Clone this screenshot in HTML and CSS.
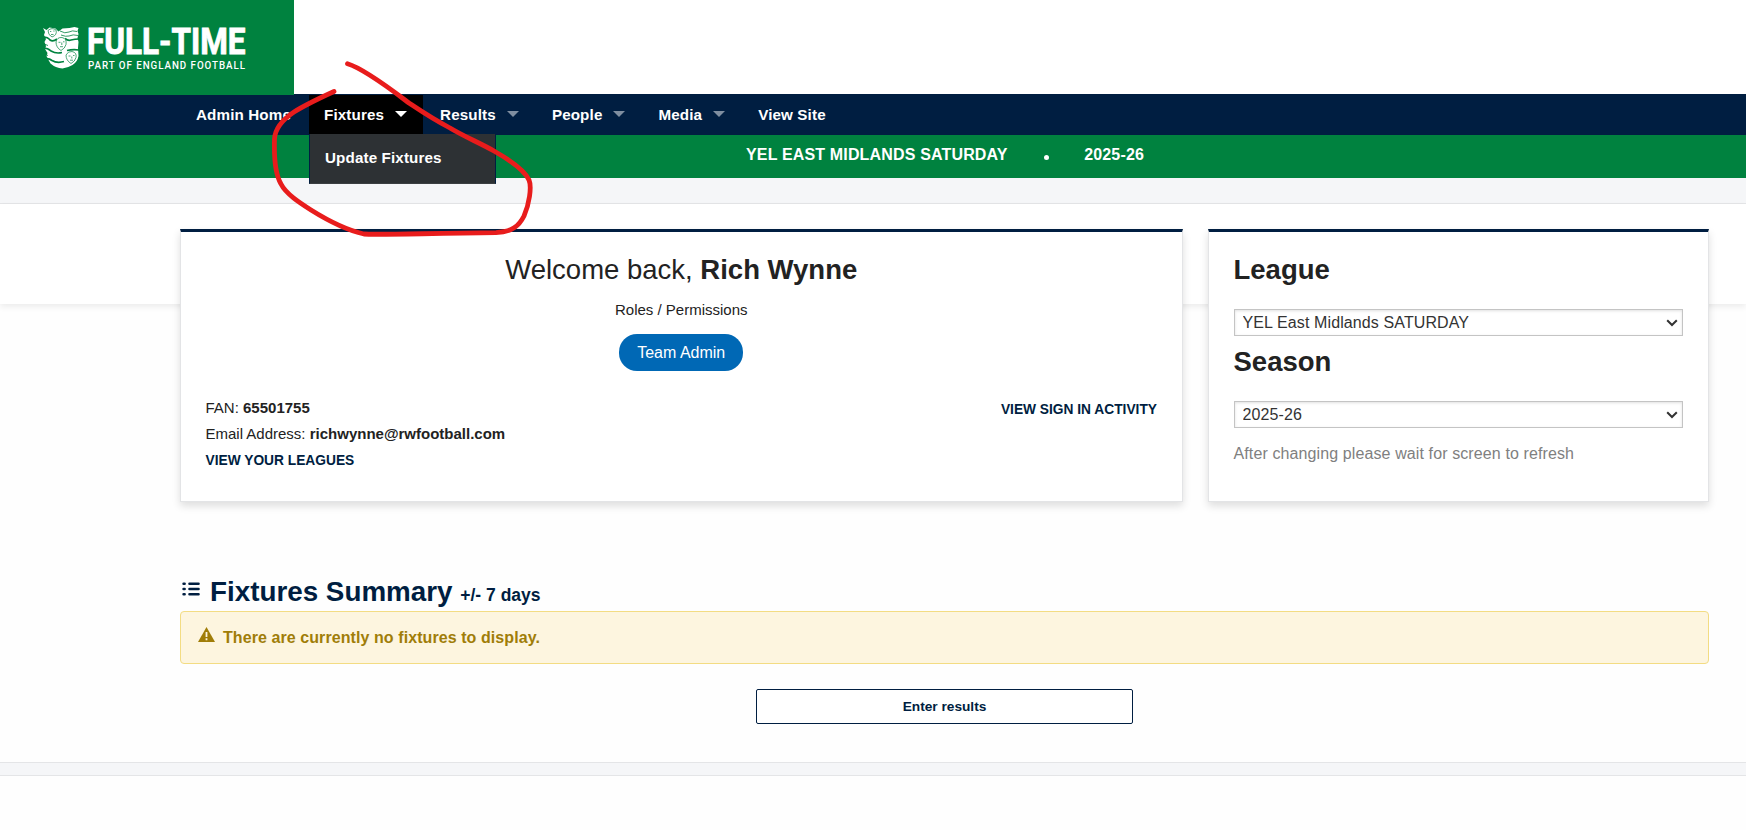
FILE: index.html
```html
<!DOCTYPE html>
<html lang="en">
<head>
  <meta charset="UTF-8">
  <meta name="viewport" content="width=device-width, initial-scale=1.0">
  <title>Full-Time - Admin Home</title>
  <link rel="stylesheet" href="styles.css">
</head>
<body>
  <!-- Logo -->
  <header class="site-header">
    <a class="logo">
      <svg width="294" height="95" viewBox="0 0 294 95">
        <path class="crest" d="M43 28l3.500 2 3-2.500 6 1 3 3 4-3 7-.500 5-1 4 1-1 3 1 3-1 4 1 4-.500 6 .500 8q-1 6-6 9-5 3-10 3.500-7-.500-12-5l-2-3.500-2-4 1-3-2.500-4 1-3-1.500-4 1.500-3-2-4 1-3z"/>
        <path class="crest-line" d="M43 37q5 0 7 3 3 2 7-1M65 38.500q3 2.500 6 1.500 4-1 8-1M43 48q5 0 8 3 5 3 11 1.500M67 50.500q6-1.500 12-.500M44 59q5-1 8 1.500 5 3 12 1"/>
        <path class="crest-thin" d="M60 31q5 3 9 1 3-2 8-.500M61 35q5 2 8 1 4-2 9-.500M43 43.500l5 2M44 54l4 1.500"/>
        <g class="crest-head">
          <path d="M48 30.500q4-3.500 8-.500 1.500 5-4 7-4-2-4-6.500z"/>
          <path d="M56 42q1-5 6-4.500 5 1 4 7-1 4-5 6-5-3-5-8.500z"/>
          <path d="M66 55q2-4 6-3.500 5 1 4 6-1 4-5 6-5-3-5-8.500z"/>
        </g>
        <path class="crest-face" d="M50 31.500h1.300M53.300 31h1.300M51 34.500h2.500M58.500 42.300h2M63 41.800h1.500M60 46.700h3M61.800 42.500v2.500M68.500 56h2M73 55.500h1.500M70 60.200h3M71.800 56.500v2"/>
        <text class="logo-name" x="87" y="54" textLength="158.500" lengthAdjust="spacingAndGlyphs">FULL-TIME</text>
        <text class="logo-sub" x="88" y="68.700" textLength="158" lengthAdjust="spacingAndGlyphs">PART OF ENGLAND FOOTBALL</text>
      </svg>
    </a>
  </header>

  <!-- Main menu -->
  <nav class="main-nav">
    <ul class="menu">
      <li class="menu-item home">Admin Home</li>
      <li class="menu-item active">Fixtures <span class="caret"></span>
        <div class="submenu">Update Fixtures</div>
      </li>
      <li class="menu-item">Results <span class="caret"></span></li>
      <li class="menu-item">People <span class="caret"></span></li>
      <li class="menu-item">Media <span class="caret"></span></li>
      <li class="menu-item">View Site</li>
    </ul>
  </nav>

  <div class="league-bar">
    <span>YEL EAST MIDLANDS SATURDAY</span>
    <span class="dot"></span>
    <span>2025-26</span>
  </div>
  <div class="strip-top"></div>
  <div class="banner"></div>

  <main class="container">
    <div class="cards">
      <section class="card">
        <h2 class="welcome">Welcome back, <strong>Rich Wynne</strong></h2>
        <p class="roles">Roles / Permissions</p>
        <span class="pill">Team Admin</span>
        <div class="details">
          <div class="details-left">
            <p>FAN: <strong>65501755</strong></p>
            <p>Email Address: <strong>richwynne@rwfootball.com</strong></p>
            <p><a class="link">VIEW YOUR LEAGUES</a></p>
          </div>
          <a class="link activity">VIEW SIGN IN ACTIVITY</a>
        </div>
      </section>

      <section class="card">
        <h2>League</h2>
        <div class="select-wrap">
          <select class="select">
            <option>YEL East Midlands SATURDAY</option>
          </select>
          <svg class="select-arrow" width="12" height="8" viewBox="0 0 12 8"><path d="M1.200 1.200L6 6l4.800-4.800"/></svg>
        </div>
        <h2 class="season">Season</h2>
        <div class="select-wrap">
          <select class="select">
            <option>2025-26</option>
          </select>
          <svg class="select-arrow" width="12" height="8" viewBox="0 0 12 8"><path d="M1.200 1.200L6 6l4.800-4.800"/></svg>
        </div>
        <p class="hint">After changing please wait for screen to refresh</p>
      </section>
    </div>

    <!-- Fixtures -->
    <h2 class="summary">
      <svg class="list-icon" width="18" height="14" viewBox="0 0 18 14">
        <path d="M7.500 1.800h9M7.500 7h9M7.500 12.200h9M1.600 1.800h1M1.600 7h1M1.600 12.200h1"/>
      </svg>
      <span>Fixtures Summary <small>+/- 7 days</small></span>
    </h2>
    <div class="alert">
      <svg class="warn-icon" width="17" height="15" viewBox="0 0 17 15">
        <path class="warn-shape" d="M8.500 0L17 15H0z"/>
        <path class="warn-mark" d="M8.500 5v5M8.500 11.300v2"/>
      </svg>
      <span>There are currently no fixtures to display.</span>
    </div>
    <button class="btn">Enter results</button>
  </main>

  <div class="strip-bottom"></div>

  <!-- Red circle round the Fixtures menu -->
  <svg class="marker" width="300" height="200" viewBox="250 50 300 200">
    <path d="M334 91.500C322 97 305 105 294 112C282 120 275 129 274.500 139C274 155 275 174 281 184C286 194 300 203 311 210C327 220 346 230 364 234C375 235 420 233.500 496 232.700C512 232 519 226 524 216C529 205 532 187 529 180C524 169 508 159 494 151C480 143 463 136 450 128C431 118 418 109 409 103C397 94 365 69 347.500 63.800"/>
  </svg>
</body>
</html>
```

FILE: styles.css
```css
* {
  box-sizing: border-box;
}

body {
  margin: 0;
  background: #fefefe;
  color: #222;
  font-family: Arial, "Liberation Sans", sans-serif;
  font-size: 16px;
  overflow: hidden;
}

h2, p, ul {
  margin: 0;
  padding: 0;
}

/* Header */
.site-header {
  height: 94px;
  background: #fff;
}

.logo {
  display: block;
  position: relative;
  z-index: 1;
  width: 294px;
  height: 95px;
  background: #00823f;
}

.logo svg {
  display: block;
}

.crest, .crest-head {
  fill: #fff;
}

.crest-line, .crest-thin {
  fill: none;
  stroke: #00823f;
  stroke-width: 1.7;
}

.crest-thin {
  stroke-width: 0.8;
}

.crest-head {
  stroke: #00823f;
  stroke-width: 0.7;
}

.crest-face {
  fill: none;
  stroke: #00823f;
  stroke-width: 0.7;
}

.logo-name {
  fill: #fff;
  stroke: #fff;
  stroke-width: 0.9;
  font-family: Roboto, sans-serif;
  font-size: 37.500px;
  font-weight: bold;
}

.logo-sub {
  fill: #fff;
  font-family: Roboto, sans-serif;
  font-size: 10.200px;
  font-weight: 500;
  letter-spacing: 1px;
}

/* Menu */
.main-nav {
  height: 41px;
  padding: 1px 0 1px 181px;
  background: #001e41;
}

.menu {
  display: flex;
  gap: 2px;
  height: 100%;
  list-style: none;
}

.menu-item {
  display: flex;
  align-items: center;
  position: relative;
  padding: 0 15px 1px;
  color: #fff;
  font-size: 15.200px;
  font-weight: bold;
  letter-spacing: 0.130px;
}

.menu-item.home {
  padding-right: 16px;
}

.menu-item.active {
  background: #000;
}

.caret {
  margin: 0 1px 0 11px;
  border: 6px solid transparent;
  border-top-color: #7f8ea0;
  border-bottom: 0;
}

.active .caret {
  border-top-color: #fff;
}

.submenu {
  position: absolute;
  top: 39px;
  left: 0;
  z-index: 2;
  width: 187px;
  height: 50px;
  padding: 0 15px;
  border: 1px solid #001e41;
  border-top: 0;
  border-bottom-color: #3b3f42;
  background: #2d3134;
  line-height: 48px;
  white-space: nowrap;
}

.league-bar {
  display: flex;
  justify-content: center;
  height: 43px;
  padding: 0 17px 0 161px;
  background: #00823f;
  color: #fff;
  font-weight: bold;
  letter-spacing: 0.160px;
  line-height: 39px;
}

.dot {
  width: 5px;
  height: 5px;
  margin: 20px 35.500px 0 36px;
  border-radius: 50%;
  background: #fff;
}

.strip-top {
  height: 26px;
  border-bottom: 1px solid #e4e5e7;
  background: #f5f6f8;
}

.banner {
  height: 100px;
  background: #fff;
  box-shadow: 0 3px 6px rgba(0, 0, 0, 0.07);
}

/* Content */
.container {
  position: relative;
  width: 1529px;
  margin: -75px 0 0 180px;
}

.cards {
  display: grid;
  grid-template-columns: 1003px 501px;
  gap: 25px;
}

.card {
  height: 273px;
  padding: 21px 25px 0 24.500px;
  border: 1px solid #e3e4e6;
  border-top: 3px solid #001e41;
  background: #fff;
  box-shadow: 0 4px 8px rgba(0, 0, 0, 0.13);
}

.card h2 {
  font-size: 27.500px;
  line-height: 34px;
}

.card .welcome {
  font-weight: normal;
  text-align: center;
}

.roles {
  margin-top: 13px;
  font-size: 15px;
  line-height: 20px;
  text-align: center;
}

.pill {
  display: block;
  width: 124px;
  height: 37px;
  margin: 14px auto 0;
  border-radius: 18px;
  background: #0068b5;
  color: #fff;
  line-height: 37px;
  text-align: center;
}

.details {
  display: flex;
  justify-content: space-between;
  margin-top: 24px;
  font-size: 15px;
  line-height: 26.200px;
}

.link {
  color: #001e41;
  font-size: 13.750px;
  font-weight: bold;
}

.activity {
  margin-top: 2px;
}

.select-wrap {
  position: relative;
  width: 449px;
  margin-top: 22px;
}

.select {
  display: block;
  width: 100%;
  height: 27px;
  padding: 0 0 0 8px;
  border: 1px solid #c4c4c4;
  border-radius: 0;
  appearance: none;
  background: #fff;
  box-shadow: inset 0 1px 3px rgba(0, 0, 0, 0.12);
  color: #333;
  font-family: inherit;
  font-size: 16px;
  letter-spacing: 0.110px;
}

.select-arrow {
  position: absolute;
  top: 10px;
  right: 5px;
}

.select-arrow path {
  fill: none;
  stroke: #333;
  stroke-width: 2;
}

.card .season {
  margin-top: 9px;
}

.hint {
  margin-top: 15px;
  color: #808080;
  letter-spacing: 0.110px;
  line-height: 22px;
}

.summary {
  display: flex;
  height: 36px;
  margin-top: 73px;
  color: #001e41;
  font-size: 27.800px;
  line-height: 34px;
}

.summary small {
  font-size: 17.500px;
}

.list-icon {
  flex: none;
  margin: 7px 10px 0 2px;
}

.list-icon path {
  stroke: #001e41;
  stroke-width: 2.600;
  stroke-linecap: round;
}

.alert {
  display: flex;
  height: 53px;
  padding: 0 17px;
  border: 1px solid #f3dc83;
  border-radius: 4px;
  background: #fdf5df;
  color: #a07d08;
  font-weight: bold;
  letter-spacing: 0.080px;
  line-height: 51px;
}

.warn-icon {
  margin: 15px 8px 0 0;
}

.warn-shape {
  fill: #a07d08;
}

.warn-mark {
  stroke: #fdf5df;
  stroke-width: 1.800;
}

.btn {
  display: block;
  width: 377px;
  height: 35px;
  margin: 25px auto 38px;
  padding: 0;
  border: 1px solid #001e41;
  border-radius: 2px;
  background: #fff;
  color: #001e41;
  font-family: inherit;
  font-size: 13.700px;
  font-weight: bold;
}

.strip-bottom {
  height: 14px;
  border: 1px solid #e4e5e7;
  border-width: 1px 0;
  background: #f5f6f8;
}

.marker {
  position: absolute;
  top: 50px;
  left: 250px;
  z-index: 3;
}

.marker path {
  fill: none;
  stroke: #e81c1c;
  stroke-width: 4.800;
  stroke-linecap: round;
}
```
